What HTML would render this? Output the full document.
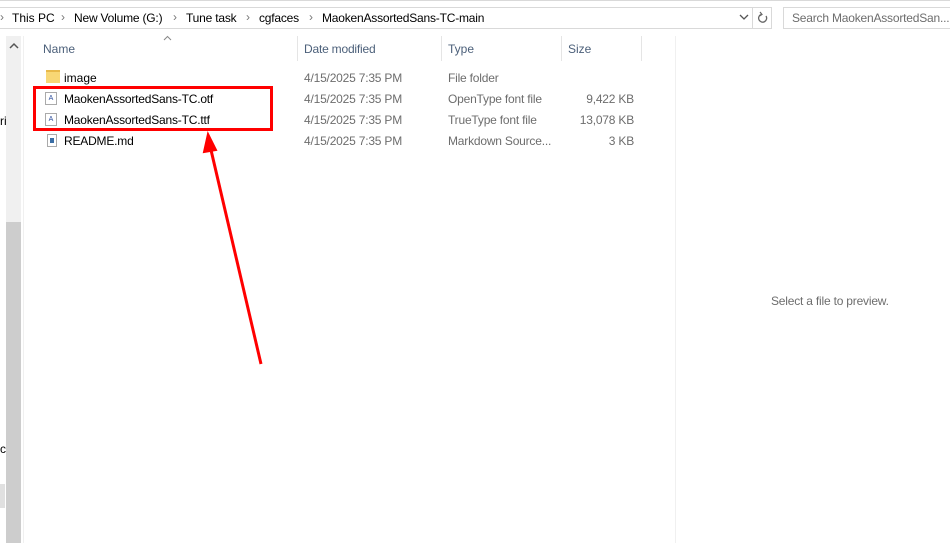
<!DOCTYPE html>
<html><head><style>
body{margin:0;width:950px;height:543px;background:#fff;position:relative;overflow:hidden;font-family:"Liberation Sans",sans-serif;font-size:12px;color:#000}
.a{position:absolute;white-space:nowrap}
.g{color:#6d6d6d}
.h{color:#4c607a}
.c{color:#777}
.n{letter-spacing:-0.2px}
</style></head><body>
<div class="a" style="left:0;top:0;width:950px;height:1px;background:#d9d9d9"></div>
<div class="a" style="left:-2px;top:7px;width:772px;height:20px;border:1px solid #d9d9d9"></div>
<div class="a" style="left:752px;top:7px;width:1px;height:22px;background:#d9d9d9"></div>
<div class="a" style="left:783px;top:7px;width:170px;height:20px;border:1px solid #d9d9d9"></div>
<div class="a g n" style="left:792px;top:11px">Search MaokenAssortedSan...</div>
<div class="a c" style="left:0;top:10px">›</div>
<div class="a" style="left:12px;top:11px">This PC</div>
<div class="a c" style="left:61px;top:10px">›</div>
<div class="a n" style="left:74px;top:11px">New Volume (G:)</div>
<div class="a c" style="left:173px;top:10px">›</div>
<div class="a n" style="left:186px;top:11px">Tune task</div>
<div class="a c" style="left:246px;top:10px">›</div>
<div class="a n" style="left:259px;top:11px">cgfaces</div>
<div class="a c" style="left:309px;top:10px">›</div>
<div class="a n" style="left:322px;top:11px">MaokenAssortedSans-TC-main</div>
<svg class="a" style="left:739px;top:13px" width="10" height="8"><path d="M1 2l4 4 4-4" stroke="#555" fill="none" stroke-width="1.3"/></svg>
<svg class="a" style="left:757px;top:11px" width="12" height="13"><path d="M9 5A4 4 0 1 1 4 3.5" stroke="#666" fill="none" stroke-width="1.3"/><path d="M3 1l2 2.5-2.5 1.5" stroke="#666" fill="none" stroke-width="1.2"/></svg>
<div class="a" style="left:6px;top:36px;width:15px;height:507px;background:#f0f0f0"></div>
<div class="a" style="left:6px;top:222px;width:15px;height:321px;background:#cdcdcd"></div>
<svg class="a" style="left:9px;top:42px" width="10" height="7"><path d="M1 6l4-4 4 4" stroke="#555" fill="none" stroke-width="1.5"/></svg>
<div class="a" style="left:23px;top:36px;width:1px;height:507px;background:#f0f0f0"></div>
<div class="a" style="left:0;top:114px">ri</div>
<div class="a" style="left:0;top:442px">c</div>
<div class="a" style="left:0;top:484px;width:5px;height:24px;background:#e0e0e0"></div>
<svg class="a" style="left:163px;top:35px" width="9" height="6"><path d="M1 5l3.5-3.5L8 5" stroke="#888" fill="none"/></svg>
<div class="a h" style="left:43px;top:42px">Name</div>
<div class="a h n" style="left:304px;top:42px">Date modified</div>
<div class="a h" style="left:448px;top:42px">Type</div>
<div class="a h" style="left:568px;top:42px">Size</div>
<div class="a" style="left:297px;top:36px;width:1px;height:25px;background:#e5e5e5"></div>
<div class="a" style="left:441px;top:36px;width:1px;height:25px;background:#e5e5e5"></div>
<div class="a" style="left:561px;top:36px;width:1px;height:25px;background:#e5e5e5"></div>
<div class="a" style="left:641px;top:36px;width:1px;height:25px;background:#e5e5e5"></div>
<div class="a" style="left:675px;top:36px;width:1px;height:507px;background:#f0f0f0"></div>
<div class="a" style="left:46px;top:70px;width:14px;height:13px;background:#f8d775;border-top:2px solid #e8b94a;box-sizing:border-box"></div>
<div class="a" style="left:64px;top:71px">image</div>
<div class="a g n" style="left:304px;top:71px">4/15/2025 7:35 PM</div>
<div class="a g n" style="left:448px;top:71px">File folder</div>
<div class="a" style="left:45px;top:92px;width:12px;height:13px;border:1px solid #aaa;box-sizing:border-box;font-size:7px;color:#2b4c9b;text-align:center;line-height:11px">A</div>
<div class="a n" style="left:64px;top:92px">MaokenAssortedSans-TC.otf</div>
<div class="a g n" style="left:304px;top:92px">4/15/2025 7:35 PM</div>
<div class="a g n" style="left:448px;top:92px">OpenType font file</div>
<div class="a g n" style="left:560px;top:92px;width:74px;text-align:right">9,422 KB</div>
<div class="a" style="left:45px;top:113px;width:12px;height:13px;border:1px solid #aaa;box-sizing:border-box;font-size:7px;color:#2b4c9b;text-align:center;line-height:11px">A</div>
<div class="a n" style="left:64px;top:113px">MaokenAssortedSans-TC.ttf</div>
<div class="a g n" style="left:304px;top:113px">4/15/2025 7:35 PM</div>
<div class="a g n" style="left:448px;top:113px">TrueType font file</div>
<div class="a g n" style="left:560px;top:113px;width:74px;text-align:right">13,078 KB</div>
<div class="a" style="left:47px;top:134px;width:10px;height:13px;border:1px solid #aaa;box-sizing:border-box"><div style="margin:3px 2px;width:4px;height:5px;background:#3a6ea5"></div></div>
<div class="a n" style="left:64px;top:134px">README.md</div>
<div class="a g n" style="left:304px;top:134px">4/15/2025 7:35 PM</div>
<div class="a g n" style="left:448px;top:134px">Markdown Source...</div>
<div class="a g n" style="left:560px;top:134px;width:74px;text-align:right">3 KB</div>
<div class="a g n" style="left:771px;top:294px">Select a file to preview.</div>
<div class="a" style="left:33px;top:86px;width:234px;height:39px;border:3px solid #f00"></div>
<svg class="a" style="left:0;top:0" width="950" height="543"><line x1="261" y1="364" x2="211" y2="150" stroke="#f00" stroke-width="3"/><path d="M208 134L216 150L204 152Z" fill="#f00" stroke="#f00" stroke-width="2"/></svg>
</body></html>
